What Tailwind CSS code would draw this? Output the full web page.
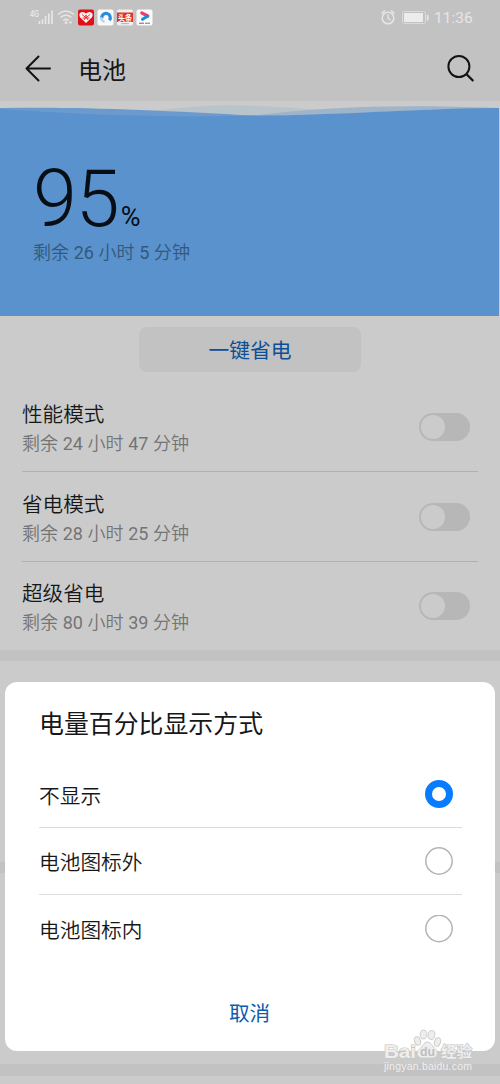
<!DOCTYPE html>
<html lang="zh-CN">
<head>
<meta charset="utf-8">
<title>电池</title>
<script src="https://cdn.jsdelivr.net/npm/@tailwindcss/browser@4"></script>
</head>
<body class="bg-[#cbcbcb] font-[Roboto,'Noto_Sans_CJK_SC',sans-serif]">
<div class="relative w-[500px] h-[1084px] overflow-hidden flex flex-col text-[#171717]">
  <!-- Status bar -->
  <div class="h-9 shrink-0 bg-[#c2c2c2] flex items-center justify-between">
    <svg class="w-[160px] h-9" viewBox="0 0 160 36" fill="none">
      <text x="30" y="17" font-size="8.500" font-weight="500" fill="#e8e8e8" textLength="9" lengthAdjust="spacingAndGlyphs">4G</text>
      <path d="M39.500 21v3M42.500 19v5M45.600 16v8M48.800 13.500v10.500M52 10.500v13.500" stroke="#e6e6e6" stroke-width="1.700"/>
      <path d="M58 14.500q8-7 16 0M60.500 17.500q5.500-4.500 11 0M63.300 20.500q2.700-2.200 5.400 0" stroke="#e6e6e6" stroke-width="1.600"/>
      <circle cx="66" cy="22.700" r="1.400" fill="#e6e6e6"/><path d="M69 22.500h3" stroke="#e6e6e6" stroke-width="1.500"/>
      <rect x="78" y="9.500" width="16" height="16" rx="2" fill="#df1018"/>
      <path d="M86 23l-5.800-5.500q-2-3 .4-5 3-1.500 5.400 1 2.400-2.500 5.400-1 2.400 2 .4 5z" fill="#fff1ef"/>
      <path d="M82 14.500l3 2.500 1-2 1 2 3-2.500M82.500 18h7M84 20l2-3 2 3" stroke="#df1018" stroke-width=".8"/>
      <rect x="97.500" y="9.500" width="16" height="16" rx="2" fill="#fafafa"/>
      <path d="M101.800 18.500a4.300 4.300 0 1 1 7.600 1.800" stroke="#2b8ddb" stroke-width="3.200"/>
      <path d="M101.200 17a5 5 0 0 0 3.300 5" stroke="#a8d4f5" stroke-width="2"/>
      <rect x="117" y="9.500" width="16" height="16" rx="2" fill="#f2f0ef"/>
      <path d="M117 12.500h16v9.500h-16z" fill="#e1302d"/>
      <text x="118" y="20.500" font-size="8" font-weight="700" fill="#fff" textLength="14" lengthAdjust="spacingAndGlyphs">头条</text>
      <path d="M121 23.700h8" stroke="#d99" stroke-width="1"/>
      <rect x="136.500" y="9.500" width="16" height="16" rx="2" fill="#fafafa"/>
      <path d="M141.800 13l6 3" stroke="#ed3c70" stroke-width="3.200" stroke-linecap="round"/>
      <path d="M147.500 16.300l-5 3" stroke="#168fd0" stroke-width="3" stroke-linecap="round"/>
      <path d="M139 23.300h5" stroke="#df6b95" stroke-width="1.400"/><path d="M145 23.300h5" stroke="#72aacc" stroke-width="1.400"/>
    </svg>
    <div class="flex items-center pr-[28px]">
      <svg class="w-[52px] h-9" viewBox="379 0 52 36" fill="none" stroke="#e6e6e6">
        <circle cx="388" cy="18" r="5.800" stroke-width="1.500"/>
        <path d="M388 14.500v3.700l2.700 2" stroke-width="1.400"/>
        <path d="M381.500 13.500l3.500-3M394.500 13.500l-3.500-3" stroke-width="1.500"/>
        <rect x="402.500" y="11.500" width="23" height="12" rx="1.800" stroke-width="1" stroke="#dadada"/>
        <rect x="404" y="13" width="19" height="9" fill="#ececec" stroke="none"/>
        <path d="M427.700 15v5.500" stroke-width="1.800"/>
      </svg>
      <span class="ml-[3px] w-[38px] text-[15.500px] leading-9 text-[#e6e6e6] whitespace-nowrap">11:36</span>
    </div>
  </div>
  <!-- App bar -->
  <div class="h-[65px] shrink-0 bg-[#c2c2c2] flex items-center pl-6 pr-[24px]">
    <svg class="w-[28px] h-7" viewBox="0 0 28 28" fill="none" stroke="#131313" stroke-width="2" stroke-linecap="round" stroke-linejoin="round"><path d="M26 13.500H2.500M14.500 1.500L2.500 13.500l12 12"/></svg>
    <span class="ml-[26px] pt-[5px] text-2xl leading-[65px]">电池</span>
    <svg class="ml-auto w-[30px] h-[30px]" viewBox="0 0 30 30" fill="none" stroke="#131313" stroke-width="2"><circle cx="12.900" cy="12.500" r="10.500"/><path d="M20.300 20l7 7" stroke-width="2.300"/></svg>
  </div>
  <!-- Battery level -->
  <div class="h-[215px] shrink-0 flex flex-col">
    <svg class="w-[500px] h-6 shrink-0" viewBox="0 0 500 24" preserveAspectRatio="none">
      <path d="M150 10C200 4 230 3 270 5.500C330 9 350 12 390 12L250 16z" fill="#b9c4ca"/>
      <path d="M250 15C330 5 400 3.500 499 7C420 8 360 13 250 15z" fill="#9fb3c9"/>
      <path d="M0 7C80 5.500 160 9 260 15V24H0z" fill="#6c9acd"/>
      <path d="M0 8C80 14 180 17 250 14.500C330 15 420 7 499 7V24H0z" fill="#5992cc"/>
    </svg>
    <div class="w-[499px] grow bg-[#5992cc] pl-[33px] flex flex-col">
      <div class="mt-[38px] flex items-baseline h-[75px] text-[#080e16]">
        <span class="text-[79px] font-light leading-[72px] tracking-[-1px]">95</span><span class="ml-[2px] text-[27px] leading-[30px]">%</span>
      </div>
      <span class="text-[18px] font-[350] tracking-[0.08px] leading-[30px] text-[#34587d]">剩余 <span class="font-normal">26</span> 小时 <span class="font-normal">5</span> 分钟</span>
    </div>
  </div>
  <!-- One-tap saving -->
  <div class="h-[68px] shrink-0 pt-[11px] flex justify-center">
    <div class="w-[222px] h-[45px] rounded-lg bg-[#c2c2c2] text-center text-[20.800px] leading-[49px] text-[#0d4f96]">一键省电</div>
  </div>
  <!-- Modes -->
  <div class="shrink-0 px-[22px] flex flex-col">
    <div class="h-[88px] border-b border-[#b0b0b0] flex justify-between pr-2">
      <div class="flex flex-col pt-[16px]"><span class="text-[20.600px] font-[350] leading-[30px]">性能模式</span><span class="text-[18px] font-[350] tracking-[0.08px] leading-[28px] text-[#747474]">剩余 <span class="font-normal">24</span> 小时 <span class="font-normal">47</span> 分钟</span></div>
      <div class="mt-[29px] w-[51px] h-7 rounded-full bg-[#b7b7b7] p-[2px]"><div class="size-6 rounded-full bg-[#cbcbcb]"></div></div>
    </div>
    <div class="h-[90px] border-b border-[#b0b0b0] flex justify-between pr-2">
      <div class="flex flex-col pt-[18px]"><span class="text-[20.600px] font-[350] leading-[30px]">省电模式</span><span class="text-[18px] font-[350] tracking-[0.08px] leading-[28px] text-[#747474]">剩余 <span class="font-normal">28</span> 小时 <span class="font-normal">25</span> 分钟</span></div>
      <div class="mt-[31px] w-[51px] h-7 rounded-full bg-[#b7b7b7] p-[2px]"><div class="size-6 rounded-full bg-[#cbcbcb]"></div></div>
    </div>
    <div class="h-[88px] flex justify-between pr-2">
      <div class="flex flex-col pt-[17px]"><span class="text-[20.600px] font-[350] leading-[30px]">超级省电</span><span class="text-[18px] font-[350] tracking-[0.08px] leading-[28px] text-[#747474]">剩余 <span class="font-normal">80</span> 小时 <span class="font-normal">39</span> 分钟</span></div>
      <div class="mt-[30px] w-[51px] h-7 rounded-full bg-[#b7b7b7] p-[2px]"><div class="size-6 rounded-full bg-[#cbcbcb]"></div></div>
    </div>
  </div>
  <div class="h-[11px] shrink-0 bg-[#c2c2c2]"></div>
  <div class="h-[201px] shrink-0"></div>
  <div class="h-[11px] shrink-0 bg-[#c2c2c2]"></div>
  <div class="h-[191px] shrink-0"></div>
  <div class="h-[12px] shrink-0 bg-[#c2c2c2]"></div>

  <!-- Dialog -->
  <div class="absolute left-[5px] top-[682px] w-[490px] h-[369px] rounded-xl bg-white flex flex-col pl-[34px] pr-[33px]">
    <div class="h-[79px] text-[24.900px] leading-[85px]">电量百分比显示方式</div>
    <div class="h-[67px] border-b border-[#dcdcdc] flex items-center justify-between pr-[9px]">
      <span class="pt-[5px] text-[20.700px] font-[350] leading-[30px]">不显示</span><span class="size-7 rounded-full border-[7px] border-[#087cff]"></span>
    </div>
    <div class="h-[67px] border-b border-[#dcdcdc] flex items-center justify-between pr-[9px]">
      <span class="pt-1 text-[20.700px] font-[350] leading-[30px]">电池图标外</span><svg class="size-7" viewBox="0 0 28 28" fill="none" stroke="#b4b4b4" stroke-width="1.500"><circle cx="14" cy="14" r="13.200"/></svg>
    </div>
    <div class="h-[67px] flex items-center justify-between pr-[9px]">
      <span class="pt-1 text-[20.700px] font-[350] leading-[30px]">电池图标内</span><svg class="size-7" viewBox="0 0 28 28" fill="none" stroke="#b4b4b4" stroke-width="1.500"><circle cx="14" cy="13.500" r="13.200"/></svg>
    </div>
    <div class="mt-[35px] pr-[2px] text-center text-[20.600px] leading-[34px] text-[#0d5cad]">取消</div>
  </div>

  <!-- Watermark -->
  <svg class="absolute left-[370px] top-[1024px] w-[130px] h-[60px]" viewBox="370 1024 130 60" font-family="'Liberation Sans','Noto Sans CJK SC',sans-serif">
    <g fill="#ededed" stroke="#c9c9c9" stroke-width=".9">
      <ellipse cx="417.500" cy="1041" rx="3" ry="4.500" transform="rotate(-15 417.500 1041)"/>
      <ellipse cx="423.500" cy="1034.500" rx="3.300" ry="4.500"/>
      <ellipse cx="431.500" cy="1035" rx="3.300" ry="4.500" transform="rotate(10 431.500 1035)"/>
      <ellipse cx="437.500" cy="1042" rx="3" ry="4.500" transform="rotate(15 437.500 1042)"/>
      <path d="M427.500 1042c4 0 5 5 8 7 3 3 2 9-3 9h-10c-6 0-7-6-3-9 3-2 4-7 8-7z"/>
    </g>
    <g fill="#eeeeee" stroke="#c4c4c4" stroke-width="1.200" paint-order="stroke" font-weight="700">
      <text x="384" y="1057.500" font-size="19" textLength="32" lengthAdjust="spacingAndGlyphs">Bai</text>
      <text x="420" y="1056" font-size="13" textLength="15" lengthAdjust="spacingAndGlyphs" fill="#bdbdbd" stroke="none">du</text>
      <text x="441" y="1057" font-size="15" textLength="31" lengthAdjust="spacingAndGlyphs">经验</text>
    </g>
    <text x="384" y="1070" font-size="10.500" fill="#efefef" textLength="88" lengthAdjust="spacing">jingyan.baidu.com</text>
  </svg>
</div>
</body>
</html>
